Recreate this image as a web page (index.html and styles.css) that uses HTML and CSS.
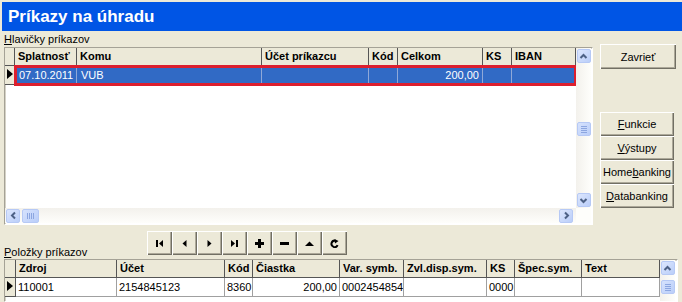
FILE: index.html
```html
<!DOCTYPE html>
<html>
  <head>
    <meta charset="utf-8">
    <title>Príkazy na úhradu</title>
    <link rel="stylesheet" href="styles.css">
  </head>
  <body>
    <div class="title">Príkazy na úhradu</div>

    <div class="upper">
      <div class="headers">
        <div class="caption"><u>H</u>lavičky príkazov</div>
        <div class="grid grid-h">
          <div class="rows">
            <div class="row hdr">
              <div class="cell ind" style="width:10px"></div>
              <div class="cell" style="width:62px">Splatnosť</div>
              <div class="cell" style="width:185px">Komu</div>
              <div class="cell" style="width:107px">Účet príkazcu</div>
              <div class="cell" style="width:29px">Kód</div>
              <div class="cell" style="width:85px">Celkom</div>
              <div class="cell" style="width:29px">KS</div>
              <div class="cell" style="width:64px">IBAN</div>
            </div>
            <div class="row">
              <div class="cell ind" style="width:10px"><span class="arrow"></span></div>
              <div class="sel">
                <div class="cell" style="width:62px">07.10.2011</div>
                <div class="cell" style="width:185px">VUB</div>
                <div class="cell" style="width:107px"></div>
                <div class="cell" style="width:29px"></div>
                <div class="cell num" style="width:85px">200,00</div>
                <div class="cell" style="width:29px"></div>
                <div class="cell" style="width:64px"></div>
              </div>
            </div>
          </div>
          <div class="vscroll">
            <div class="sb"><svg width="11" height="11"><polyline points="2.5,7 5.5,4 8.5,7" /></svg></div>
            <div class="thumb v" style="margin-top:58px"><i></i><i></i><i></i><i></i></div>
            <div class="sb end"><svg width="11" height="11"><polyline points="2.5,4 5.5,7 8.5,4" /></svg></div>
          </div>
          <div class="hscroll">
            <div class="sb"><svg width="11" height="11"><polyline points="7,2.5 4,5.5 7,8.5" /></svg></div>
            <div class="thumb h"><i></i><i></i><i></i><i></i></div>
            <div class="sb end"><svg width="11" height="11"><polyline points="4,2.5 7,5.5 4,8.5" /></svg></div>
          </div>
          <div class="corner"></div>
        </div>
      </div>

      <div class="side">
        <button class="btn close">Zavrieť</button>
        <div class="btn-group">
          <button class="btn"><u>F</u>unkcie</button>
          <button class="btn"><u>V</u>ýstupy</button>
          <button class="btn">Home<u>b</u>anking</button>
          <button class="btn"><u>D</u>atabanking</button>
        </div>
      </div>
    </div>

    <div class="middle">
      <div class="caption2"><u>P</u>oložky príkazov</div>
      <div class="nav">
        <button class="nb"><svg width="9" height="9"><rect x="1" y="1" width="2" height="7"/><polygon points="8,1 4,4.5 8,8"/></svg></button>
        <button class="nb"><svg width="9" height="9"><polygon points="6.5,1 2.5,4.5 6.5,8"/></svg></button>
        <button class="nb"><svg width="9" height="9"><polygon points="2.5,1 6.5,4.5 2.5,8"/></svg></button>
        <button class="nb"><svg width="9" height="9"><polygon points="1,1 5,4.5 1,8"/><rect x="6" y="1" width="2" height="7"/></svg></button>
        <button class="nb"><svg width="9" height="9"><rect x="0" y="3" width="9" height="3"/><rect x="3" y="0" width="3" height="9"/></svg></button>
        <button class="nb"><svg width="9" height="9"><rect x="0" y="3" width="9" height="3"/></svg></button>
        <button class="nb"><svg width="9" height="9"><polygon points="0,7 4.5,2.5 9,7"/></svg></button>
        <button class="nb"><svg width="9" height="9"><path class="arc" d="M5.5 1.8 A3.2 3.2 0 1 0 7.6 6.2"/><polygon points="4.5,0 8.5,2 5,4.5"/></svg></button>
      </div>
    </div>

    <div class="grid grid-p">
      <div class="rows">
        <div class="row hdr">
          <div class="cell ind" style="width:11px"></div>
          <div class="cell" style="width:101px">Zdroj</div>
          <div class="cell" style="width:108px">Účet</div>
          <div class="cell" style="width:28px">Kód</div>
          <div class="cell" style="width:87px">Čiastka</div>
          <div class="cell" style="width:64px">Var. symb.</div>
          <div class="cell" style="width:83px">Zvl.disp.sym.</div>
          <div class="cell" style="width:28px">KS</div>
          <div class="cell" style="width:67px">Špec.sym.</div>
          <div class="cell" style="width:78px">Text</div>
        </div>
        <div class="row data">
          <div class="cell ind" style="width:11px"><span class="arrow"></span></div>
          <div class="cell" style="width:101px">110001</div>
          <div class="cell" style="width:108px">2154845123</div>
          <div class="cell" style="width:28px">8360</div>
          <div class="cell num" style="width:87px">200,00</div>
          <div class="cell" style="width:64px">0002454854</div>
          <div class="cell" style="width:83px"></div>
          <div class="cell" style="width:28px">0000</div>
          <div class="cell" style="width:67px"></div>
          <div class="cell" style="width:78px"></div>
        </div>
      </div>
      <div class="vscroll">
        <div class="sb"><svg width="11" height="11"><polyline points="2.5,7 5.5,4 8.5,7" /></svg></div>
        <div class="thumb v" style="margin-top:4px"><i></i><i></i><i></i><i></i></div>
      </div>
    </div>
  </body>
</html>
```

FILE: styles.css
```css
html {
  overflow: hidden;
}
body {
  margin: 0;
  width: 682px;
  height: 302px;
  overflow: hidden;
  background-color: #ECE9D8;
  font-family: "Liberation Sans", Arial, sans-serif;
  font-size: 11px;
  color: #000;
}
.title {
  margin: 2px 0 0 2px;
  height: 29px;
  padding-left: 6px;
  background-color: #0055E5;
  color: #fff;
  font-weight: bold;
  font-size: 17px;
  line-height: 29px;
}
.upper {
  display: flex;
}
.headers {
  margin-left: 4px;
  width: 589px;
}
.caption {
  height: 16px;
  line-height: 16px;
}
.grid {
  box-sizing: border-box;
  background-color: #fff;
  border: 1px solid #A5A296;
  border-right-color: #fff;
  border-bottom-color: #fff;
  box-shadow: inset 1px 1px #D5D2C6;
}
.grid-h {
  width: 589px;
  height: 178px;
  display: grid;
  grid-template-columns: 571px 15px;
  grid-template-rows: 160px 15px;
}
.rows {
  overflow: hidden;
}
.row {
  display: flex;
}
.cell {
  box-sizing: border-box;
  height: 18px;
  line-height: 17px;
  padding: 0 2px;
  white-space: nowrap;
  overflow: hidden;
  border-right: 1px solid #A0A0A0;
  border-bottom: 1px solid #A0A0A0;
}
.num {
  text-align: right;
}
.hdr .cell {
  background-color: #ECE9D8;
  font-weight: bold;
  border-color: #555;
  padding-left: 3px;
}
.ind {
  padding: 0;
  background-color: #ECE9D8;
  border-color: #555;
}
.arrow {
  display: block;
  width: 0;
  height: 0;
  margin: 3px 0 0 2px;
  border-left: 6px solid #000;
  border-top: 5px solid transparent;
  border-bottom: 5px solid transparent;
}
.row .cell.ind {
  height: 19px;
}
.hdr .cell.ind {
  height: 18px;
}
.sel {
  display: flex;
  height: 19px;
  background-color: #316AC5;
  outline: 3px solid #DC1F2E;
  outline-offset: -2px;
}
.sel .cell {
  height: 19px;
  line-height: 19px;
  color: #fff;
  border-right-color: #8FA8D8;
  border-bottom: none;
  padding-left: 4px;
}
.sel .cell.num {
  padding-right: 3px;
}
.data .cell {
  height: 19px;
  line-height: 18px;
}
.vscroll {
  display: flex;
  flex-direction: column;
  align-items: center;
  background: linear-gradient(90deg, #F3F1EC, #FEFEFB);
}
.hscroll {
  display: flex;
  align-items: center;
  padding: 0 2px 0 0;
  background: linear-gradient(180deg, #F3F1EC, #FEFEFB);
}
.corner {
  background-color: #FEFEFB;
}
.sb {
  box-sizing: border-box;
  width: 14px;
  height: 14px;
  margin: 1px;
  flex: none;
  display: flex;
  align-items: center;
  justify-content: center;
  border: 1px solid #B6C9F5;
  border-radius: 2px;
  background: linear-gradient(135deg, #DCE6FD, #BACEF9);
}
.sb polyline {
  fill: none;
  stroke: #4D6185;
  stroke-width: 2;
}
.sb.end {
  margin-top: auto;
  margin-left: auto;
}
.vscroll .sb.end {
  margin-left: 1px;
}
.hscroll .sb.end {
  margin-top: 1px;
}
.thumb {
  box-sizing: border-box;
  flex: none;
  display: flex;
  align-items: center;
  justify-content: center;
  gap: 1px;
  border: 1px solid #B6C9F5;
  border-radius: 2px;
  background: linear-gradient(135deg, #D6E2FD, #BACEF9);
}
.thumb.v {
  width: 14px;
  height: 14px;
  flex-direction: column;
}
.thumb.v i {
  display: block;
  width: 6px;
  height: 1px;
  background-color: #8CA6E0;
}
.thumb.h {
  width: 17px;
  height: 14px;
  margin-left: 1px;
}
.thumb.h i {
  display: block;
  width: 1px;
  height: 6px;
  background-color: #8CA6E0;
}
.side {
  margin-left: 7px;
  padding-top: 13px;
  display: flex;
  flex-direction: column;
}
.btn, .nb {
  box-sizing: border-box;
  border: none;
  padding: 0;
  background-color: #ECE9D8;
  font-family: "Liberation Sans", Arial, sans-serif;
  font-size: 11px;
  color: #000;
  box-shadow: inset 1px 1px #fff, inset -1px -1px #716F64, inset -2px -2px #ACA899;
}
.btn.close {
  width: 76px;
  height: 25px;
}
.btn-group {
  margin-top: 43px;
  display: flex;
  flex-direction: column;
}
.btn-group .btn {
  width: 74px;
  height: 24px;
}
.middle {
  display: flex;
  height: 34px;
}
.caption2 {
  margin-left: 4px;
  width: 143px;
  align-self: flex-end;
  line-height: 14px;
}
.nav {
  display: flex;
  margin-top: 6px;
  height: 24px;
}
.nb {
  width: 25px;
  height: 24px;
  display: flex;
  align-items: center;
  justify-content: center;
}
.nb svg {
  fill: #000;
}
.nb .arc {
  fill: none;
  stroke: #000;
  stroke-width: 2;
}
.grid-p {
  margin-left: 4px;
  width: 674px;
  height: 43px;
  display: grid;
  grid-template-columns: 655px 15px;
}
```
